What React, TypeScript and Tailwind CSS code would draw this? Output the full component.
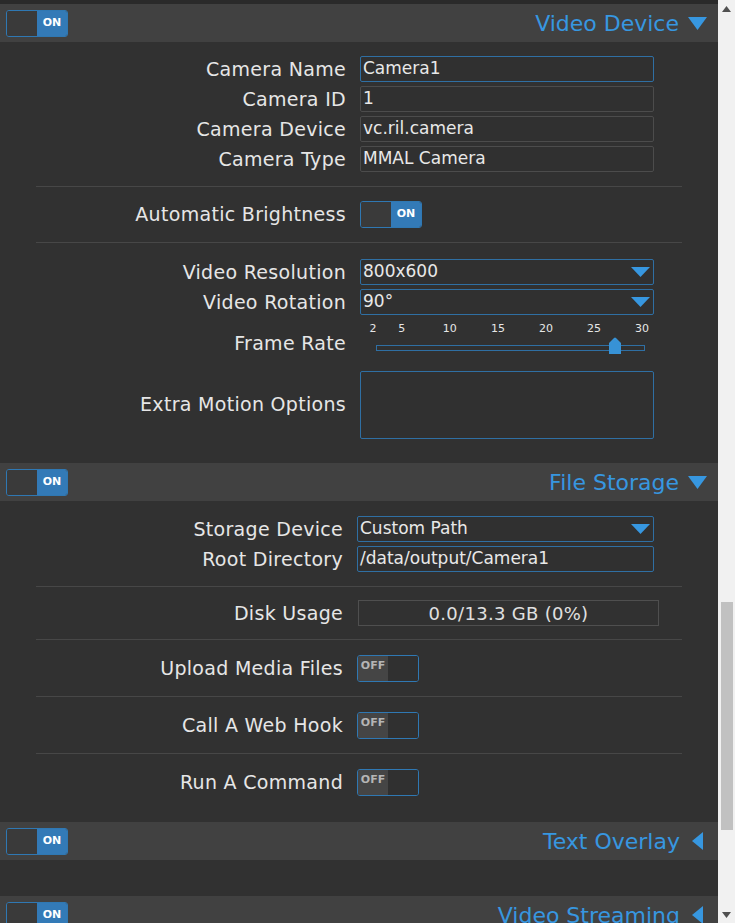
import React from "react";

const FONT = { fontFamily: '"DejaVu Sans", Verdana, sans-serif' };

function Toggle({ on }: { on: boolean }) {
  return (
    <div className="flex h-[27px] w-[62px] overflow-hidden rounded-[3px] border border-[#2f78b3]">
      {on ? (
        <>
          <div className="w-[30px] bg-[#3a3a3a]" />
          <div className="flex flex-1 items-center justify-center bg-[#337ab7] text-[11px] font-bold text-white">ON</div>
        </>
      ) : (
        <>
          <div className="flex w-[30px] items-center justify-center bg-[#454545] pb-[3px] text-[11px] font-bold text-[#b5b5b5]">OFF</div>
          <div className="flex-1 bg-[#303030]" />
        </>
      )}
    </div>
  );
}

function DownTri({ w = 18, h = 12 }: { w?: number; h?: number }) {
  return (
    <svg width={w} height={h} viewBox={`0 0 ${w} ${h}`}>
      <polygon points={`0,0 ${w},0 ${w / 2},${h}`} fill="#3797e0" />
    </svg>
  );
}

function LeftTri() {
  return (
    <svg width="11" height="18" viewBox="0 0 11 18">
      <polygon points="11,0 11,18 0,9" fill="#3797e0" />
    </svg>
  );
}

function Header({ title, open }: { title: string; open: boolean }) {
  return (
    <div className="flex h-[38px] items-center justify-between bg-[#414141] pl-[6px] pr-[11px]">
      <Toggle on />
      {open ? (
        <div className="flex items-center gap-[9px] text-[22px] text-[#3797e0]">
          <span>{title}</span>
          <DownTri w={19} h={13} />
        </div>
      ) : (
        <div className="mr-[4px] flex items-center gap-[12px] text-[22px] text-[#3797e0]">
          <span>{title}</span>
          <LeftTri />
        </div>
      )}
    </div>
  );
}

function Row({ label, children, lw = 346, gap = 14, h = 30 }: { label: string; children: React.ReactNode; lw?: number; gap?: number; h?: number }) {
  return (
    <div className="flex items-center" style={{ height: h }}>
      <div className="shrink-0 text-right text-[19px] tracking-[0.3px] text-[#e6e6e6]" style={{ width: lw, marginRight: gap }}>
        {label}
      </div>
      {children}
    </div>
  );
}

function TextBox({ value, blue, w = 294 }: { value: string; blue?: boolean; w?: number }) {
  return (
    <div
      className={`flex h-[26px] items-center rounded-[2px] border bg-[#303030] pl-[2px] text-[17px] text-[#e8e8e8] ${blue ? "border-[#2f6fa3]" : "border-[#4c4c4c]"}`}
      style={{ width: w }}
    >
      {value}
    </div>
  );
}

function Select({ value, w = 294 }: { value: string; w?: number }) {
  return (
    <div
      className="flex h-[26px] items-center justify-between rounded-[2px] border border-[#2f6fa3] bg-[#303030] pl-[2px] pr-[3px] text-[17px] text-[#e8e8e8]"
      style={{ width: w }}
    >
      <span>{value}</span>
      <DownTri w={19} h={10} />
    </div>
  );
}

function Sep() {
  return <div className="mx-[36px] h-px bg-[#474747]" />;
}

const ticks = [2, 5, 10, 15, 20, 25, 30];

function Slider() {
  const left = 16;
  const width = 269;
  const pos = (v: number) => left + ((v - 2) / 28) * width;
  return (
    <div className="relative h-[48px] w-[300px]">
      {ticks.map((t) => (
        <span
          key={t}
          className="absolute top-[4px] -translate-x-1/2 text-[11px] text-[#e6e6e6]"
          style={{ left: pos(t) - 3 }}
        >
          {t}
        </span>
      ))}
      <div className="absolute top-[28px] h-[6px] border border-[#2f6fa3] bg-[#303030]" style={{ left, width }} />
      <svg className="absolute top-[20px]" style={{ left: pos(26.9) - 6 }} width="12" height="17" viewBox="0 0 12 17">
        <path d="M0,6 L5,1 Q6,0 7,1 L12,6 L12,17 L0,17 Z" fill="#3792d6" />
      </svg>
    </div>
  );
}

export default function App() {
  return (
    <div className="flex h-[923px] w-[735px] overflow-hidden bg-[#313131]" style={FONT}>
      <div className="w-[718px] shrink-0">
        <div className="h-[4px] bg-[#2a2a2a]" />
        <Header title="Video Device" open />
        <div className="pt-[12px]">
          <Row label="Camera Name"><TextBox value="Camera1" blue /></Row>
          <Row label="Camera ID"><TextBox value="1" /></Row>
          <Row label="Camera Device"><TextBox value="vc.ril.camera" /></Row>
          <Row label="Camera Type"><TextBox value="MMAL Camera" /></Row>
          <div className="h-[12px]" />
          <Sep />
          <Row label="Automatic Brightness" h={55}><Toggle on /></Row>
          <Sep />
          <div className="h-[14px]" />
          <Row label="Video Resolution"><Select value="800x600" /></Row>
          <Row label="Video Rotation"><Select value="90°" /></Row>
          <div className="flex h-[48px] items-center">
            <div className="mr-[14px] w-[346px] pt-[4px] text-right text-[19px] tracking-[0.3px] text-[#e6e6e6]">Frame Rate</div>
            <Slider />
          </div>
          <div className="flex h-[79px] items-center">
            <div className="mr-[14px] w-[346px] text-right text-[19px] tracking-[0.3px] text-[#e6e6e6]">Extra Motion Options</div>
            <div className="h-[68px] w-[294px] rounded-[2px] border border-[#2f6fa3] bg-[#303030]" />
          </div>
          <div className="h-[19px]" />
        </div>
        <Header title="File Storage" open />
        <div className="pt-[13px]">
          <Row label="Storage Device" lw={343}><Select value="Custom Path" w={297} /></Row>
          <Row label="Root Directory" lw={343}><TextBox value="/data/output/Camera1" blue w={297} /></Row>
          <div className="h-[12px]" />
          <Sep />
          <Row label="Disk Usage" lw={343} gap={15} h={52}>
            <div className="flex h-[26px] w-[301px] items-center justify-center border border-[#4f4f4f] text-[18px] tracking-[0.3px] text-[#e0e0e0]">0.0/13.3 GB (0%)</div>
          </Row>
          <Sep />
          <Row label="Upload Media Files" lw={343} h={56}><Toggle on={false} /></Row>
          <Sep />
          <Row label="Call A Web Hook" lw={343} h={56}><Toggle on={false} /></Row>
          <Sep />
          <Row label="Run A Command" lw={343} h={56}><Toggle on={false} /></Row>
          <div className="h-[12px]" />
        </div>
        <Header title="Text Overlay" open={false} />
        <div className="h-[36px]" />
        <Header title="Video Streaming" open={false} />
      </div>
      <div className="relative w-[17px] shrink-0 bg-[#f1f1f1]">
        <svg className="absolute left-[4px] top-[6px]" width="9" height="6" viewBox="0 0 9 6">
          <polygon points="0,6 9,6 4.5,0" fill="#505050" />
        </svg>
        <div className="absolute left-[3px] top-[602px] h-[228px] w-[12px] bg-[#c1c1c1]" />
        <svg className="absolute left-[4px] top-[912px]" width="9" height="6" viewBox="0 0 9 6">
          <polygon points="0,0 9,0 4.5,6" fill="#505050" />
        </svg>
      </div>
    </div>
  );
}
